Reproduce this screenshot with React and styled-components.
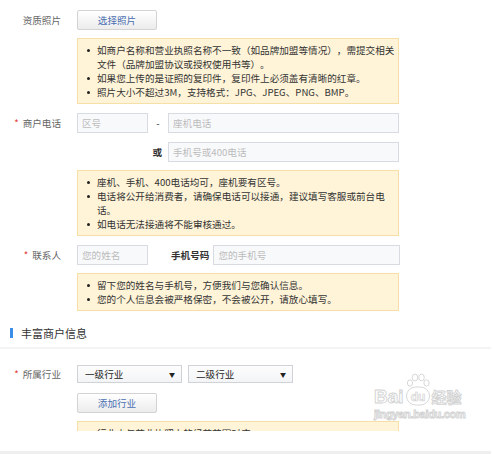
import React from 'react';
import styled, { createGlobalStyle } from 'styled-components';

const GlobalStyle = createGlobalStyle`
  body {
    margin: 0;
    background: #fff;
    font-family: "Noto Sans CJK SC", "Noto Sans", sans-serif;
    text-spacing-trim: space-all;
  }
`;

const Page = styled.div`
  position: relative;
  width: 493px;
  height: 454px;
  overflow: hidden;
`;

const Viewport = styled.div`
  height: 431px;
  overflow: hidden;
  padding-top: 10px;
  box-sizing: border-box;
`;

const Footer = styled.div`
  width: 491px;
  height: 20px;
  border-bottom: 3px solid #efefef;
`;

const Row = styled.div`
  display: flex;
  align-items: center;
  height: ${p => p.$h || 20}px;
  margin-bottom: ${p => p.$mb || 0}px;
`;

const Label = styled.div`
  width: 61px;
  margin-right: 16px;
  flex-shrink: 0;
  text-align: right;
  color: #666;
  font-size: 9.6px;
  line-height: 20px;
  white-space: nowrap;
`;

const Star = styled.span`
  color: #e5403b;
  margin-right: 4px;
`;

const Button = styled.button`
  width: 80px;
  height: 20px;
  padding: 0;
  border: 1px solid #d3d3d3;
  border-radius: 2px;
  background: linear-gradient(#ffffff, #ececec);
  color: #4a6fb1;
  font-family: inherit;
  font-size: 9.6px;
  line-height: 18px;
`;

const Input = styled.input`
  width: ${p => p.$w}px;
  height: 20px;
  box-sizing: border-box;
  border: 1px solid #d8dce2;
  background: #f8f9fb;
  padding: 0 4px;
  font-family: inherit;
  font-size: 9.6px;
  color: #333;
  outline: none;
  &::placeholder {
    color: #bcbcbc;
  }
`;

const Dash = styled.span`
  width: 20px;
  text-align: center;
  color: #333;
  font-size: 9.6px;
`;

const Inline = styled.span`
  color: #333;
  font-weight: bold;
  font-size: 9.6px;
  margin: 0 ${p => p.$right || 0}px 0 ${p => p.$left || 0}px;
  white-space: nowrap;
`;

const Fill = styled.div`
  display: flex;
  align-items: center;
  justify-content: flex-end;
  width: 322px;
`;

const Notice = styled.ul`
  list-style: none;
  margin: 0 0 ${p => p.$mb || 0}px 77px;
  width: 322px;
  box-sizing: border-box;
  padding: 4px 0;
  background: #fff4d8;
  border: 1px solid #f6e0a7;
  color: #333;
  font-size: 9.6px;
  line-height: 14px;
`;

const Item = styled.li`
  position: relative;
  padding-left: 19px;
  white-space: nowrap;
  &::before {
    content: "";
    position: absolute;
    left: 9px;
    top: 6px;
    width: 3px;
    height: 3px;
    border-radius: 50%;
    background: #222;
  }
`;

const Punct = styled.span`
  display: inline-block;
  width: ${p => p.$w || 1}em;
  text-align: center;
`;

const Section = styled.div`
  display: flex;
  align-items: center;
  margin-top: 16px;
  padding-left: 10px;
  height: 12px;
`;

const Bar = styled.span`
  width: 3px;
  height: 10px;
  background: #3a8ee6;
  margin-right: 8px;
`;

const Title = styled.span`
  font-size: 11px;
  color: #333;
  line-height: 12px;
`;

const Divider = styled.div`
  width: 491px;
  height: 2px;
  margin: 8px 0 16px;
  background: #f4f4f4;
`;

const Select = styled.div`
  width: 105px;
  height: 18px;
  box-sizing: border-box;
  border: 1px solid #cfd3d8;
  background: linear-gradient(#fdfdfd, #f3f4f6);
  display: flex;
  align-items: center;
  justify-content: space-between;
  padding: 0 6px 0 7px;
  margin-right: ${p => p.$mr || 0}px;
  font-size: 9.6px;
  color: #222;
`;

const Arrow = styled.span`
  font-size: 6px;
  color: #222;
`;

const Watermark = styled.div`
  position: absolute;
  left: 374px;
  top: 373px;
  width: 94px;
  color: #fff;
  -webkit-text-stroke: 0.9px #d2d2d2;
  pointer-events: none;
`;

const MarkTop = styled.div`
  display: flex;
  align-items: flex-end;
  height: 33px;
`;

const MarkBai = styled.span`
  font-family: "Liberation Sans", sans-serif;
  font-weight: bold;
  font-size: 19px;
  line-height: 18px;
`;

const Paw = styled.svg`
  width: 26px;
  height: 33px;
  margin: 0 1px;
`;

const MarkJing = styled.span`
  font-size: 15px;
  line-height: 18px;
  font-weight: bold;
`;

const MarkUrl = styled.div`
  font-family: "Liberation Sans", sans-serif;
  font-size: 11px;
  font-weight: bold;
  line-height: 14px;
  margin-top: 1px;
  letter-spacing: -0.3px;
`;

export default function App() {
  return (
    <Page>
      <GlobalStyle />
      <Viewport>
        <Row $mb={8}>
          <Label>资质照片</Label>
          <Button>选择照片</Button>
        </Row>
        <Notice $mb={9}>
          <Item>
            如商户名称和营业执照名称不一致<Punct>（</Punct>如品牌加盟等情况<Punct>）</Punct><Punct>，</Punct>需提交相关<br />
            文件<Punct>（</Punct>品牌加盟协议或授权使用书等<Punct>）</Punct>。
          </Item>
          <Item>如果您上传的是证照的复印件<Punct>，</Punct>复印件上必须盖有清晰的红章。</Item>
          <Item>照片大小不超过3M<Punct>，</Punct>支持格式<Punct>：</Punct>JPG、JPEG、PNG、BMP。</Item>
        </Notice>

        <Row $mb={9}>
          <Label><Star>*</Star>商户电话</Label>
          <Input $w={71} placeholder="区号" />
          <Dash>-</Dash>
          <Input $w={231} placeholder="座机电话" />
        </Row>
        <Row $mb={8}>
          <Label />
          <Fill>
            <Inline $right={6}>或</Inline>
            <Input $w={231} placeholder="手机号或400电话" />
          </Fill>
        </Row>
        <Notice $mb={9}>
          <Item>座机、手机、400电话均可<Punct>，</Punct>座机要有区号。</Item>
          <Item>
            电话将公开给消费者<Punct>，</Punct>请确保电话可以接通<Punct>，</Punct>建议填写客服或前台电<br />
            话。
          </Item>
          <Item>如电话无法接通将不能审核通过。</Item>
        </Notice>

        <Row $mb={8}>
          <Label><Star>*</Star>联系人</Label>
          <Input $w={71} placeholder="您的姓名" />
          <Inline $left={23} $right={4}>手机号码</Inline>
          <Input $w={187} placeholder="您的手机号" />
        </Row>
        <Notice>
          <Item>留下您的姓名与手机号<Punct>，</Punct>方便我们与您确认信息。</Item>
          <Item>您的个人信息会被严格保密<Punct>，</Punct>不会被公开<Punct>，</Punct>请放心填写。</Item>
        </Notice>

        <Section>
          <Bar />
          <Title>丰富商户信息</Title>
        </Section>
        <Divider />

        <Row $h={18} $mb={10}>
          <Label><Star>*</Star>所属行业</Label>
          <Select $mr={6}>一级行业<Arrow>▼</Arrow></Select>
          <Select>二级行业<Arrow>▼</Arrow></Select>
        </Row>
        <Row $mb={8}>
          <Label />
          <Button>添加行业</Button>
        </Row>
        <Notice>
          <Item>行业中与营业执照上的经营范围对应</Item>
        </Notice>
      </Viewport>
      <Footer />

      <Watermark>
        <MarkTop>
          <MarkBai>Bai</MarkBai>
          <Paw viewBox="0 0 26 33">
            <g fill="#fff" stroke="#d2d2d2" strokeWidth="0.9">
              <ellipse cx="5" cy="10" rx="2.6" ry="3.2" />
              <ellipse cx="10" cy="4.5" rx="2.8" ry="3.4" />
              <ellipse cx="16.5" cy="4.5" rx="2.8" ry="3.4" />
              <ellipse cx="21.5" cy="10" rx="2.6" ry="3.2" />
              <rect x="1.5" y="14" width="23" height="18" rx="9" />
            </g>
            <text x="13" y="28" textAnchor="middle" fontFamily="Liberation Sans, sans-serif" fontWeight="bold" fontSize="12" fill="#fff" stroke="#d2d2d2" strokeWidth="0.7">du</text>
          </Paw>
          <MarkJing>经验</MarkJing>
        </MarkTop>
        <MarkUrl>jingyan.baidu.com</MarkUrl>
      </Watermark>
    </Page>
  );
}
